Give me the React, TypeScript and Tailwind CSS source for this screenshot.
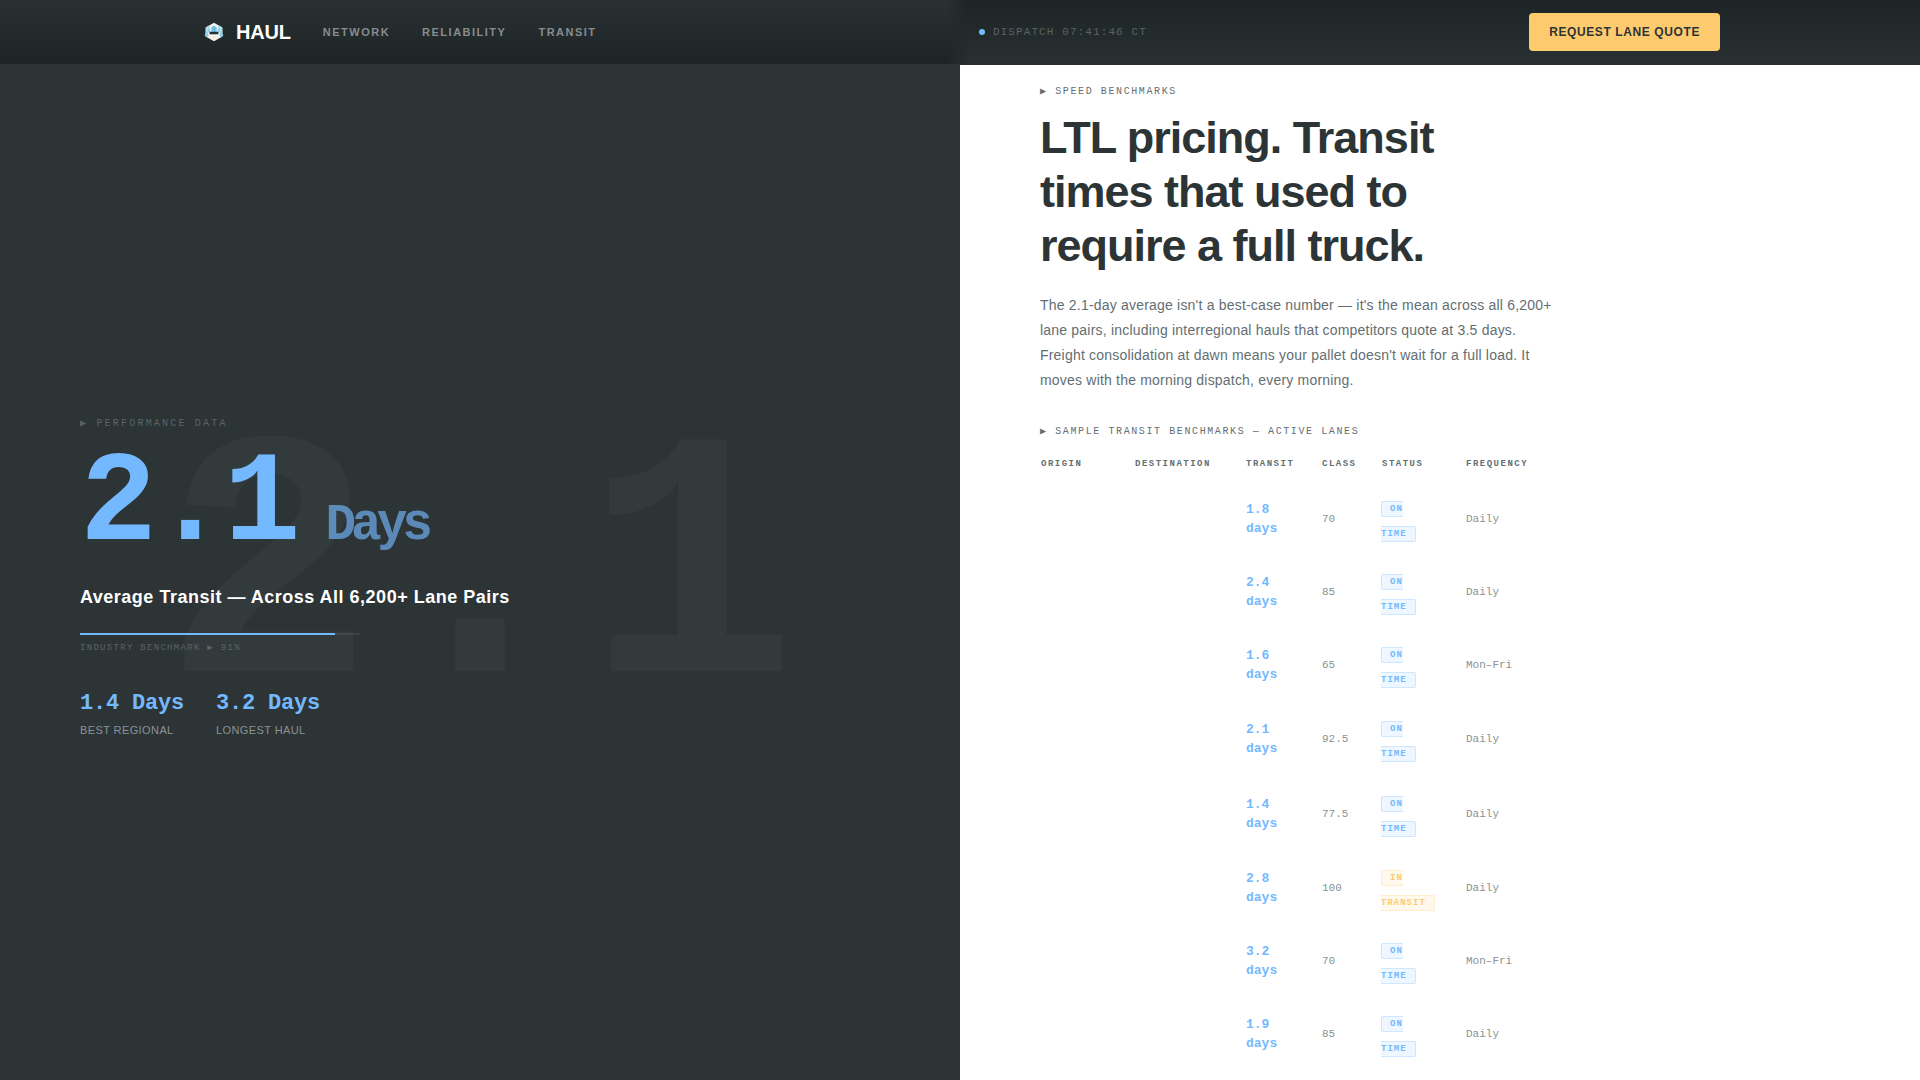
import type { ReactNode } from "react";

const mono = "font-['Liberation_Mono',monospace]";

type Lane = {
  transit: string;
  freight: string;
  status: string;
  frequency: string;
  height: string;
};

const lanes: Lane[] = [
  { transit: "1.8 days", freight: "70", status: "ON TIME", frequency: "Daily", height: "h-[73px]" },
  { transit: "2.4 days", freight: "85", status: "ON TIME", frequency: "Daily", height: "h-[73px]" },
  { transit: "1.6 days", freight: "65", status: "ON TIME", frequency: "Mon–Fri", height: "h-[73px]" },
  { transit: "2.1 days", freight: "92.5", status: "ON TIME", frequency: "Daily", height: "h-[75px]" },
  { transit: "1.4 days", freight: "77.5", status: "ON TIME", frequency: "Daily", height: "h-[75px]" },
  { transit: "2.8 days", freight: "100", status: "IN TRANSIT", frequency: "Daily", height: "h-[73px]" },
  { transit: "3.2 days", freight: "70", status: "ON TIME", frequency: "Mon–Fri", height: "h-[73px]" },
  { transit: "1.9 days", freight: "85", status: "ON TIME", frequency: "Daily", height: "h-[73px]" },
];

const columns = [
  { label: "ORIGIN", width: "w-[94px]" },
  { label: "DESTINATION", width: "w-[111px]" },
  { label: "TRANSIT", width: "w-[76px]" },
  { label: "CLASS", width: "w-[60px]" },
  { label: "STATUS", width: "w-[84px]" },
  { label: "FREQUENCY", width: "w-[85px]" },
];

function Logo() {
  return (
    <svg viewBox="0 0 28 28" className="size-7" aria-hidden="true">
      <path d="M14 4.800 22.300 9.500v9L14 23.200l-8.300-4.700v-9z" fill="#f3f5f3" />
      <path d="M5.700 9.500 10 7.100v7.500H8.500l-1 4.900-1.800-1zM22.300 9.500 18 7.100v7.500h1.500l1 4.900 1.800-1z" fill="#b4dcec" />
      <path d="M11.300 9.500 14 7.500l2.700 2V14h-5.400z" fill="#6fbfe0" />
      <path d="M8.200 10.800h2V14h-2zM17.800 10.800h2V14h-2z" fill="#86cbe5" />
      <path d="M4.600 17.200 6.500 13l2.300 4.800-1.600 1.700zM23.400 17.200 21.500 13l-2.300 4.800 1.600 1.700z" fill="#8fd0e8" />
      <path d="M9.600 13.800h8.800v2.500H9.600z" fill="#27313a" />
      <path d="M10.500 18.200h7L14 21.500z" fill="#fbe8cf" />
    </svg>
  );
}

function Badge({ children }: { children: ReactNode }) {
  const tone =
    children === "IN TRANSIT"
      ? "border-[#fdcb6e]/25 bg-[#fdcb6e]/12 text-[#fdcb6e]"
      : "border-[#74b9ff]/25 bg-[#74b9ff]/12 text-[#74b9ff]";
  return (
    <span className={`rounded-xs border px-2 py-0.5 text-[9px] font-bold tracking-[1px] ${tone}`}>
      {children}
    </span>
  );
}

function Header() {
  return (
    <header className="relative z-10 h-16 bg-linear-to-b from-[#1d2425] to-[#293032]">
      <div className="absolute inset-0 bg-linear-to-b from-[#2a3133] to-[#1d2425] [mask-image:linear-gradient(to_right,#000_calc(50%-14px),transparent_calc(50%+10px))]" />
      <div className="relative mx-auto flex h-16 max-w-[1520px] items-center justify-between">
        <div className="flex items-center gap-8">
          <a href="#home" className="flex items-center gap-2 text-xl font-bold tracking-[-0.2px] text-white">
            <Logo />
            HAUL
          </a>
          <nav className="flex items-center gap-8 text-[11px] font-bold tracking-[1.5px] text-[#868d8f]">
            <a href="#network">NETWORK</a>
            <a href="#reliability">RELIABILITY</a>
            <a href="#transit">TRANSIT</a>
          </nav>
        </div>
        <div className={`flex items-center gap-2 text-[11px] tracking-[1.1px] text-[#5b6365] ${mono}`}>
          <span className="size-1.5 rounded-full bg-[#74b9ff]" />
          DISPATCH 07:41:46 CT
        </div>
        <button className="h-[38px] rounded-sm bg-[#fdcb6e] px-5 text-xs font-bold tracking-[0.6px] text-[#2d3436]">
          REQUEST LANE QUOTE
        </button>
      </div>
    </header>
  );
}

function Performance() {
  return (
    <section className="relative flex flex-col justify-center overflow-hidden bg-[#2d3436] px-20 pt-2">
      <div
        aria-hidden="true"
        className={`pointer-events-none absolute inset-0 flex items-center justify-center pt-3 text-[352px] leading-none font-bold text-white/3 ${mono}`}
      >
        2.1
      </div>
      <div className="relative">
        <p className={`text-[10px] leading-[18px] tracking-[2.2px] text-[#5b6365] ${mono}`}>▶ PERFORMANCE DATA</p>
        <p className={`mt-2 text-[128px] leading-[128px] font-bold tracking-[-5px] text-[#74b9ff] ${mono}`}>
          2.1<span className="ml-[30px] text-[51px] leading-none opacity-65">Days</span>
        </p>
        <h2 className="mt-4 text-lg leading-6 font-bold tracking-[0.5px] text-white">
          Average Transit — Across All 6,200+ Lane Pairs
        </h2>
        <div className="mt-6 h-0.5 w-[280px] bg-white/8">
          <div className="h-full w-[91%] bg-[#74b9ff]" />
        </div>
        <p className={`mt-2 text-[9px] leading-[10px] tracking-[1.3px] text-[#5b6365] ${mono}`}>
          INDUSTRY BENCHMARK ▶ 91%
        </p>
        <dl className="mt-[37px] flex gap-8">
          <div className="flex flex-col-reverse">
            <dt className="mt-1 text-[11px] leading-4 tracking-[0.4px] text-[#8b9294]">BEST REGIONAL</dt>
            <dd className={`text-[22px] leading-7 font-bold tracking-[-0.2px] text-[#74b9ff] ${mono}`}>1.4 Days</dd>
          </div>
          <div className="flex flex-col-reverse">
            <dt className="mt-1 text-[11px] leading-4 tracking-[0.4px] text-[#8b9294]">LONGEST HAUL</dt>
            <dd className={`text-[22px] leading-7 font-bold tracking-[-0.2px] text-[#74b9ff] ${mono}`}>3.2 Days</dd>
          </div>
        </dl>
      </div>
    </section>
  );
}

function Benchmarks() {
  return (
    <section className="border-t border-[#293032] bg-white px-20 pt-[19px]">
      <p className={`text-[10px] leading-4 tracking-[1.6px] text-[#636e72] ${mono}`}>▶ SPEED BENCHMARKS</p>
      <h1 className="mt-[11px] max-w-[480px] text-[45px] leading-[54px] font-bold tracking-[-1px] text-[#2d3436]">
        LTL pricing. Transit times that used to require a full truck.
      </h1>
      <p className="mt-5 max-w-[520px] text-sm leading-[25px] tracking-[0.2px] text-[#636e72]">
        The 2.1-day average isn't a best-case number — it's the mean across all 6,200+ lane pairs, including
        interregional hauls that competitors quote at 3.5 days. Freight consolidation at dawn means your pallet
        doesn't wait for a full load. It moves with the morning dispatch, every morning.
      </p>
      <table className={`mt-[31px] w-[510px] table-fixed border-collapse text-left ${mono}`}>
        <caption className="pb-2 text-left text-[10px] leading-4 tracking-[1.6px] text-[#636e72]">
          ▶ SAMPLE TRANSIT BENCHMARKS — ACTIVE LANES
        </caption>
        <thead>
          <tr className="h-[34px]">
            {columns.map((column) => (
              <th
                key={column.label}
                className={`px-px text-[9px] font-bold tracking-[1.5px] text-[#636e72] ${column.width}`}
              >
                {column.label}
              </th>
            ))}
          </tr>
        </thead>
        <tbody>
          {lanes.map((lane, index) => (
            <tr key={index} className={lane.height}>
              <td />
              <td />
              <td className="pr-8 pl-px text-[13px] leading-[19px] font-bold text-[#74b9ff]">{lane.transit}</td>
              <td className="px-px pt-0.5 text-[11px] text-[#8b9294]">{lane.freight}</td>
              <td className="pt-1 pr-6 text-[15px] leading-6">
                <Badge>{lane.status}</Badge>
              </td>
              <td className="px-px pt-0.5 text-[11px] text-[#8b9294]">{lane.frequency}</td>
            </tr>
          ))}
        </tbody>
      </table>
    </section>
  );
}

export default function App() {
  return (
    <div className="flex h-screen flex-col overflow-hidden font-['Liberation_Sans',Arial,sans-serif]">
      <Header />
      <main className="grid min-h-0 flex-1 grid-cols-2">
        <Performance />
        <Benchmarks />
      </main>
    </div>
  );
}
